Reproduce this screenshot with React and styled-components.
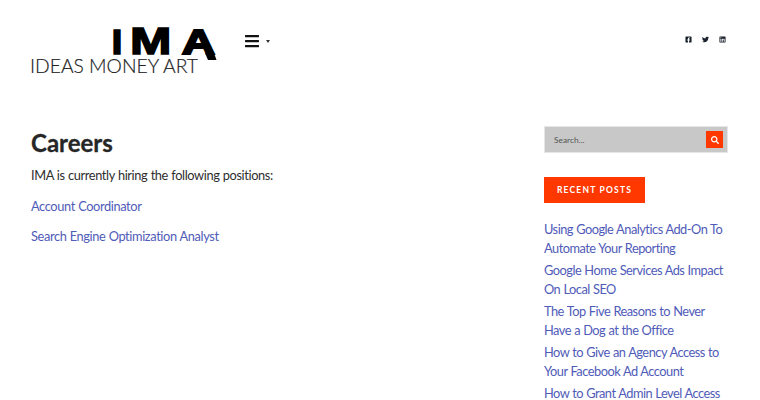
import React from 'react';
import styled, { createGlobalStyle } from 'styled-components';
import { FaFacebookSquare, FaTwitter, FaLinkedin, FaBars, FaSearch } from 'react-icons/fa';

const Global = createGlobalStyle`
  html, body { margin: 0; padding: 0; background: #fff; height: 400px; overflow: hidden; }
  body { font-family: "Lato", "Noto Sans", sans-serif; color: #2b2b2b; }
  a { text-decoration: none; color: #4f5bb8; }
`;
const Page = styled.div`
  width: 760px; height: 400px; overflow: hidden;
  padding: 0 32px 0 30px; box-sizing: border-box;
`;
const Header = styled.header`
  height: 126px; display: flex; align-items: flex-start;
`;
const Logo = styled.svg`
  width: 186px; height: 50px; margin-top: 26px; display: block; flex: none; overflow: visible;
`;
const Burger = styled.button`
  display: flex; align-items: center; gap: 6px; margin: 33px 0 0 28px; padding: 0;
  background: none; border: 0; color: #111; height: 16px;
`;
const Caret = styled.span`
  width: 0; height: 0; border: 2.5px solid transparent; border-top: 3px solid #333; border-bottom: 0;
`;
const Social = styled.nav`
  margin: 36px 0 0 auto; display: flex; gap: 10px; color: #1c2430; padding-right: 2px;
`;
const Body = styled.div`
  display: grid; grid-template-columns: 514px 184px; align-items: start;
`;
const Main = styled.main`
  padding-left: 1px;
`;
const Title = styled.h1`
  font-size: 24px; line-height: 34px; font-weight: 700; margin: 0 0 5px; color: #262626;
  -webkit-text-stroke: 0.3px #262626;
`;
const Para = styled.p`
  font-size: 12.8px; letter-spacing: -0.38px; word-spacing: 0.4px; line-height: 21px; margin: 0 0 9.5px; color: #2e2e2e;
`;
const SearchBox = styled.form`
  height: 27px; background: #c8c8c8; display: flex; align-items: center; justify-content: space-between;
  padding: 0 4px 0 9px; box-sizing: border-box; border: 1px solid #e6e6e6;
`;
const SearchLabel = styled.span`
  font-size: 8.4px; color: #555;
`;
const SearchBtn = styled.span`
  width: 17px; height: 17px; background: #ff3800; color: #fff; display: flex; align-items: center; justify-content: center;
`;
const Badge = styled.h2`
  margin: 24px 0 17px; background: #ff3800; color: #fff;
  font-size: 8.5px; line-height: 26px; height: 26px; width: 101px; text-align: center; letter-spacing: 1.2px; font-weight: 700;
`;
const PostList = styled.ul`
  list-style: none; margin: 0; padding: 0; display: flex; flex-direction: column; gap: 4px;
`;
const Post = styled.li`
  font-size: 12.8px; letter-spacing: -0.5px; word-spacing: 0.4px; line-height: 18.5px;
`;
const posts = [
  'Using Google Analytics Add-On To Automate Your Reporting',
  'Google Home Services Ads Impact On Local SEO',
  'The Top Five Reasons to Never Have a Dog at the Office',
  'How to Give an Agency Access to Your Facebook Ad Account',
  'How to Grant Admin Level Access to Your Website',
];
const Heavy = { fontFamily: 'Liberation Sans', fontWeight: 700, fontSize: 36, fill: '#000', stroke: '#000', strokeWidth: 1.4 };
export default function App() {
  return (
    <Page>
      <Global />
      <Header>
        <Logo viewBox="0 0 186 50" aria-label="IMA Ideas Money Art">
          <text {...Heavy} transform="translate(81.5 28) scale(1.1 1)">I</text>
          <text {...Heavy} transform="translate(100 28) scale(1.38 1)">M</text>
          <text {...Heavy} strokeWidth={2.2} transform="translate(152 28) scale(1.26 1)">A</text>
          <polygon points="175,27 184,27 186.5,34 178,34" fill="#000" />
          <text x="0" y="47" fontFamily="Lato" fontWeight="300" fontSize="20" textLength="168" lengthAdjust="spacingAndGlyphs" fill="#222" stroke="#222" strokeWidth="0.2">IDEAS MONEY ART</text>
        </Logo>
        <Burger aria-label="menu"><FaBars size={16} /><Caret /></Burger>
        <Social>
          <FaFacebookSquare size={7} />
          <FaTwitter size={7} />
          <FaLinkedin size={7} />
        </Social>
      </Header>
      <Body>
        <Main>
          <Title>Careers</Title>
          <Para>IMA is currently hiring the following positions:</Para>
          <Para><a href="#a">Account Coordinator</a></Para>
          <Para><a href="#b">Search Engine Optimization Analyst</a></Para>
        </Main>
        <aside>
          <SearchBox>
            <SearchLabel>Search...</SearchLabel>
            <SearchBtn><FaSearch size={8} /></SearchBtn>
          </SearchBox>
          <Badge>RECENT POSTS</Badge>
          <PostList>
            {posts.map(p => <Post key={p}><a href="#p">{p}</a></Post>)}
          </PostList>
        </aside>
      </Body>
    </Page>
  );
}
